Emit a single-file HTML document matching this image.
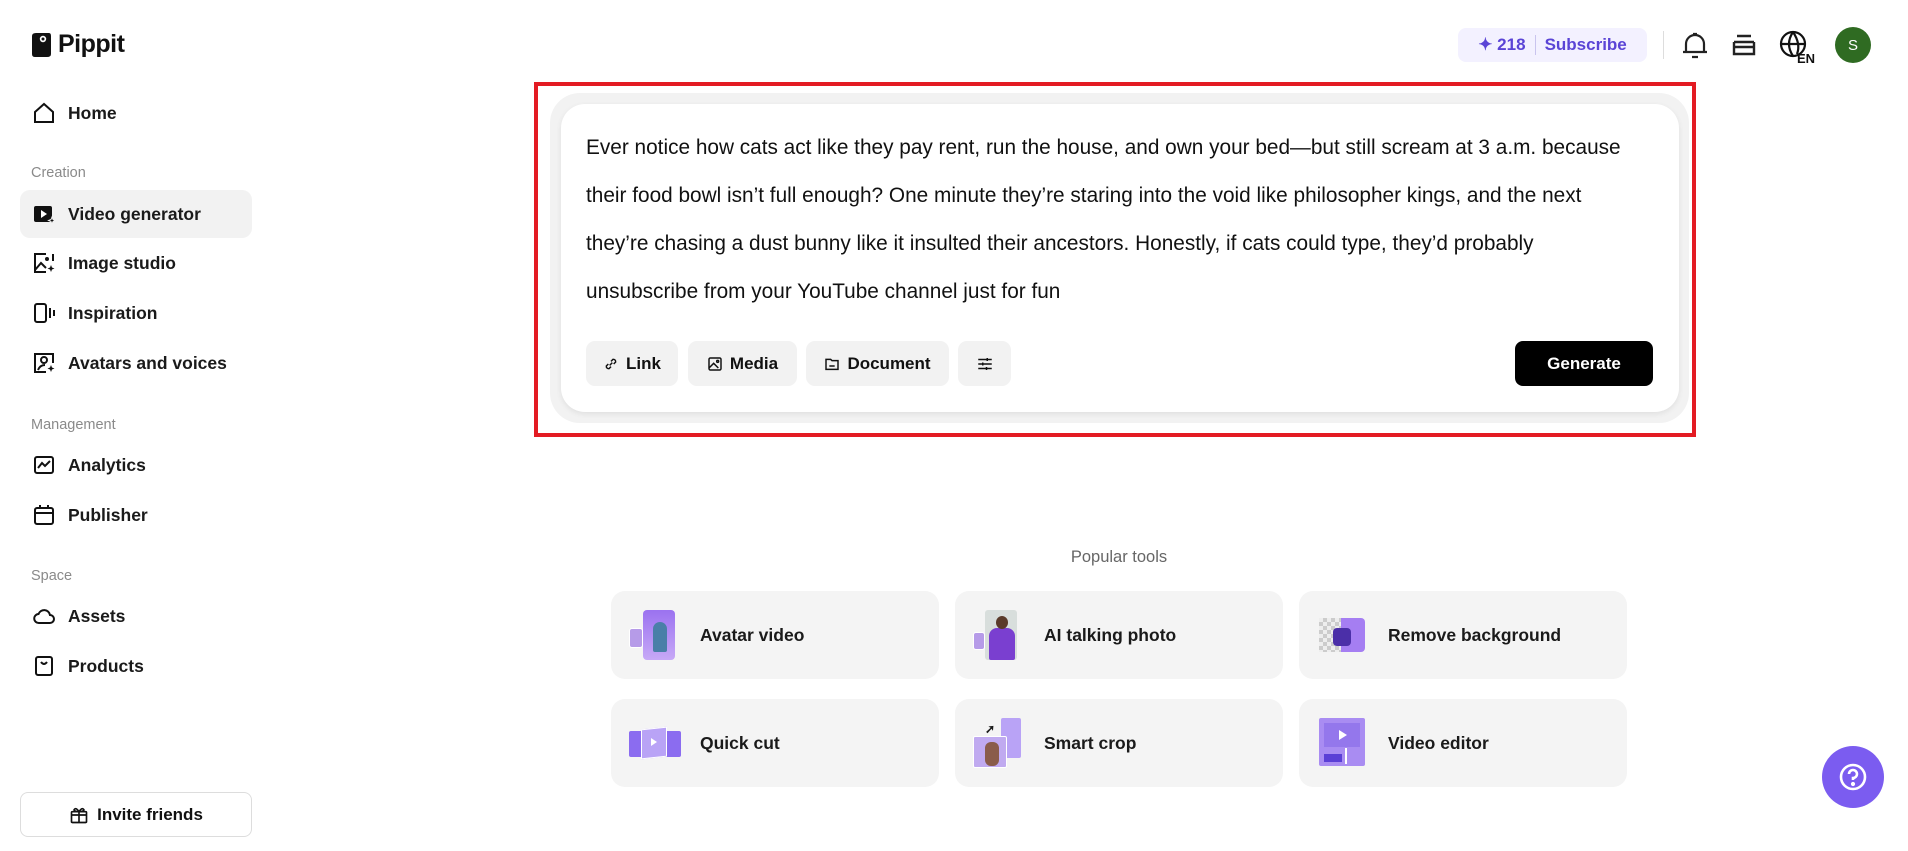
<!DOCTYPE html>
<html><head><meta charset="utf-8"><style>
*{box-sizing:border-box;margin:0;padding:0}
body{width:1908px;height:851px;background:#fff;font-family:"Liberation Sans",Arial,sans-serif;color:#111;position:relative;overflow:hidden}
.abs{position:absolute}
.logo{left:30px;top:30px;font-size:25px;font-weight:700;letter-spacing:-0.5px;display:flex;align-items:center;gap:6px}
.nav{position:absolute;left:20px;width:232px;height:48px;display:flex;align-items:center;padding-left:12px;font-size:17.5px;font-weight:600;color:#1a1a1a;border-radius:10px}
.nav svg{width:24px;height:24px;margin-right:12px;flex:none}
.nav.act{background:#f2f2f2}
.sec{position:absolute;left:31px;font-size:14.5px;color:#8a8a8a;font-weight:500}
.invite{left:20px;top:792px;width:232px;height:45px;border:1px solid #ddd;border-radius:8px;display:flex;align-items:center;justify-content:center;gap:8px;font-size:17px;font-weight:600}
.red{left:534px;top:82px;width:1162px;height:355px;border:4px solid #e31b23}
.outer{left:550px;top:93px;width:1139px;height:330px;background:#f2f2f2;border-radius:30px}
.card{left:561px;top:104px;width:1118px;height:308px;background:#fff;border-radius:24px;box-shadow:0 2px 6px rgba(0,0,0,.08)}
.txt{left:586px;top:124px;width:1052px;font-size:20.8px;line-height:48px;color:#111}
.btn{position:absolute;top:341px;height:45px;background:#f2f2f2;border-radius:9px;display:flex;align-items:center;justify-content:center;gap:7px;font-size:17px;font-weight:600}
.gen{left:1515px;top:341px;width:138px;height:45px;background:#000;color:#fff;border-radius:8px;display:flex;align-items:center;justify-content:center;font-size:17px;font-weight:600}
.tool{position:absolute;width:328px;height:88px;background:#f4f4f4;border-radius:14px;display:flex;align-items:center;padding-left:18px;font-size:17.5px;font-weight:600;color:#1a1a1a}
.ic{width:50px;height:50px;margin-right:21px;position:relative;flex:none}
</style></head><body>

<div class="abs logo"><svg width="22" height="26" viewBox="0 0 22 26"><path d="M2 4 Q2 1 6 1 L19 1 Q21 1 21 4 L21 22 Q21 25 17 25 L5 25 Q2 25 2 22Z" fill="#111"/><circle cx="13" cy="7" r="3.2" fill="#fff"/><circle cx="13" cy="7" r="1.5" fill="#111"/></svg>Pippit</div>

<div class="nav" style="top:89px"><svg viewBox="0 0 24 24" fill="none" stroke="#111" stroke-width="2"><path d="M3 11 L12 3 L21 11 V21 H3Z"/></svg>Home</div>
<div class="sec" style="top:165px">Creation</div>
<div class="nav act" style="top:190px"><svg viewBox="0 0 24 24"><rect x="2" y="4" width="18" height="16" rx="2" fill="#111"/><path d="M9 8 L15 12 L9 16Z" fill="#fff"/><path d="M20 15 l1 2.5 2.5 1 -2.5 1 -1 2.5 -1 -2.5 -2.5 -1 2.5 -1z" fill="#111" stroke="#f2f2f2" stroke-width="1"/></svg>Video generator</div>
<div class="nav" style="top:239px"><svg viewBox="0 0 24 24" fill="none" stroke="#111" stroke-width="2"><path d="M14 3 H3 V21 H14"/><path d="M21 3 V10"/><path d="M3 19 L9 12 L14 17"/><circle cx="15" cy="8" r="1" fill="#111"/><path d="M19 14 l1 2.5 2.5 1 -2.5 1 -1 2.5 -1 -2.5 -2.5 -1 2.5 -1z" fill="#111" stroke="none"/></svg>Image studio</div>
<div class="nav" style="top:289px"><svg viewBox="0 0 24 24" fill="none" stroke="#111" stroke-width="2"><rect x="3" y="3" width="11" height="18" rx="2"/><path d="M18 7 V17 M22 9 V15"/></svg>Inspiration</div>
<div class="nav" style="top:339px"><svg viewBox="0 0 24 24" fill="none" stroke="#111" stroke-width="2"><path d="M14 21 H3 V3 H21 V12"/><circle cx="12" cy="9" r="3"/><path d="M6 19 Q8 14 13 14"/><path d="M19 14 l1 2.5 2.5 1 -2.5 1 -1 2.5 -1 -2.5 -2.5 -1 2.5 -1z" fill="#111" stroke="none"/></svg>Avatars and voices</div>
<div class="sec" style="top:417px">Management</div>
<div class="nav" style="top:441px"><svg viewBox="0 0 24 24" fill="none" stroke="#111" stroke-width="2"><rect x="3" y="4" width="18" height="16" rx="2"/><path d="M6 15 L10 10 L13 13 L18 8"/></svg>Analytics</div>
<div class="nav" style="top:491px"><svg viewBox="0 0 24 24" fill="none" stroke="#111" stroke-width="2"><rect x="3" y="5" width="18" height="16" rx="2"/><path d="M3 10 H21 M8 2 V6 M16 2 V6"/></svg>Publisher</div>
<div class="sec" style="top:568px">Space</div>
<div class="nav" style="top:592px"><svg viewBox="0 0 24 24" fill="none" stroke="#111" stroke-width="2"><path d="M7 19 H18 A4 4 0 0 0 18 11 A6 6 0 0 0 6.5 10 A4.5 4.5 0 0 0 7 19Z"/></svg>Assets</div>
<div class="nav" style="top:642px"><svg viewBox="0 0 24 24" fill="none" stroke="#111" stroke-width="2"><rect x="4" y="3" width="16" height="18" rx="2"/><path d="M9 8 Q12 12 15 8"/></svg>Products</div>
<div class="abs invite"><svg width="20" height="20" viewBox="0 0 24 24" fill="none" stroke="#111" stroke-width="2"><rect x="3" y="8" width="18" height="13" rx="1"/><path d="M3 12 H21 M12 8 V21 M12 8 Q8 2 6 6 Q7 8 12 8 Q16 2 18 6 Q17 8 12 8"/></svg>Invite friends</div>

<div class="abs" style="left:1458px;top:28px;width:189px;height:34px;background:#f3f1ff;border-radius:8px;display:flex;align-items:center;justify-content:center;gap:9px;font-size:17px;font-weight:700;color:#5a44d6">
<span>✦ 218</span><span style="width:1px;height:20px;background:#c9c4ee"></span><span>Subscribe</span></div>
<div class="abs" style="left:1663px;top:31px;width:1px;height:28px;background:#ddd"></div>
<svg class="abs" style="left:1682px;top:31px" width="26" height="28" viewBox="0 0 26 28" fill="none" stroke="#222" stroke-width="2.2"><path d="M4 21 V13 A9 9 0 0 1 22 13 V21 M1 21 H25 M10 26 H16 M11 3 H15"/></svg>
<svg class="abs" style="left:1731px;top:33px" width="26" height="24" viewBox="0 0 26 24" fill="none" stroke="#222" stroke-width="2.4"><path d="M6 3 H20 M3 9 H23 M3 9 V21 H23 V9 M3 14 H23"/></svg>
<svg class="abs" style="left:1779px;top:30px" width="38" height="34" viewBox="0 0 38 34"><g fill="none" stroke="#111" stroke-width="2.2"><circle cx="14" cy="14" r="12"/><path d="M2 14 H26 M14 2 Q6 14 14 26 M14 2 Q22 14 18 24"/></g><text x="18" y="33" font-size="13" font-weight="700" font-family="Liberation Sans" fill="#111">EN</text></svg>
<div class="abs" style="left:1835px;top:27px;width:36px;height:36px;border-radius:50%;background:#2f6b22;color:#fff;font-size:15px;display:flex;align-items:center;justify-content:center">S</div>

<div class="abs red"></div>
<div class="abs outer"></div>
<div class="abs card"></div>
<div class="abs txt">Ever notice how cats act like they pay rent, run the house, and own your bed—but still scream at 3 a.m. because their food bowl isn’t full enough? One minute they’re staring into the void like philosopher kings, and the next they’re chasing a dust bunny like it insulted their ancestors. Honestly, if cats could type, they’d probably unsubscribe from your YouTube channel just for fun</div>
<div class="btn" style="left:586px;width:92px"><svg width="16" height="16" viewBox="0 0 24 24" fill="none" stroke="#111" stroke-width="2.2"><path d="M10 14 L14 10 M8 12 L5 15 A3.5 3.5 0 0 0 9 19 L12 16 M16 12 L19 9 A3.5 3.5 0 0 0 15 5 L12 8"/></svg>Link</div>
<div class="btn" style="left:688px;width:109px"><svg width="16" height="16" viewBox="0 0 24 24" fill="none" stroke="#111" stroke-width="2.2"><rect x="3" y="3" width="18" height="18" rx="2"/><path d="M3 18 L10 11 L17 18"/><circle cx="16" cy="8" r="1.5"/></svg>Media</div>
<div class="btn" style="left:806px;width:143px"><svg width="16" height="16" viewBox="0 0 24 24" fill="none" stroke="#111" stroke-width="2.2"><path d="M3 5 H10 L12 7 H21 V20 H3Z M8 15 H16"/></svg>Document</div>
<div class="btn" style="left:958px;width:53px"><svg width="18" height="18" viewBox="0 0 24 24" fill="none" stroke="#111" stroke-width="2"><path d="M3 6 H21 M3 12 H21 M3 18 H21 M15 4 V8 M9 10 V14 M14 16 V20"/></svg></div>
<div class="abs gen">Generate</div>

<div class="abs" style="left:0;width:2238px;top:548px;text-align:center;font-size:16.5px;color:#666;font-weight:500">Popular tools</div>

<div class="tool" style="left:611px;top:591px"><div class="ic"><div class="abs" style="left:14px;top:0;width:32px;height:50px;background:linear-gradient(#9b72f0,#c7a9f7);border-radius:4px"></div><div class="abs" style="left:24px;top:12px;width:14px;height:30px;background:#4a7fa8;border-radius:7px 7px 2px 2px"></div><div class="abs" style="left:0;top:18px;width:14px;height:20px;background:#b69be8;border:1px solid #fff;border-radius:3px"></div></div>Avatar video</div>
<div class="tool" style="left:955px;top:591px"><div class="ic"><div class="abs" style="left:12px;top:0;width:32px;height:50px;background:#d8dedc;border-radius:3px"></div><div class="abs" style="left:16px;top:18px;width:26px;height:32px;background:#7a3fd0;border-radius:8px 8px 2px 2px"></div><div class="abs" style="left:23px;top:6px;width:12px;height:13px;background:#5a3a2a;border-radius:50%"></div><div class="abs" style="left:0;top:22px;width:12px;height:18px;background:#b69be8;border:1px solid #fff;border-radius:3px"></div></div>AI talking photo</div>
<div class="tool" style="left:1299px;top:591px"><div class="ic"><div class="abs" style="left:2px;top:8px;width:22px;height:34px;background:repeating-conic-gradient(#ccc 0 25%,#eee 0 50%) 0 0/8px 8px"></div><div class="abs" style="left:24px;top:8px;width:24px;height:34px;background:#a57ef2;border-radius:0 4px 4px 0"></div><div class="abs" style="left:16px;top:18px;width:18px;height:18px;background:#4b2fa8;border-radius:4px"></div></div>Remove background</div>

<div class="tool" style="left:611px;top:699px"><div class="ic"><div class="abs" style="left:0;top:13px;width:52px;height:26px;background:#8b6cf0;border-radius:2px"></div><div class="abs" style="left:12px;top:10px;width:26px;height:30px;background:#b9a3f6;border:1px solid #fff;transform:skewY(-6deg)"></div><div class="abs" style="left:22px;top:20px;width:0;height:0;border-left:6px solid #fff;border-top:4px solid transparent;border-bottom:4px solid transparent"></div></div>Quick cut</div>
<div class="tool" style="left:955px;top:699px"><div class="ic"><div class="abs" style="left:28px;top:0;width:20px;height:40px;background:#b9a3f6;border-radius:2px"></div><div class="abs" style="left:0;top:18px;width:34px;height:32px;background:#c0aaf0;border:1px solid #fff;border-radius:2px"></div><div class="abs" style="left:12px;top:24px;width:14px;height:24px;background:#8a5c4a;border-radius:6px"></div><div class="abs" style="left:12px;top:4px;font-size:12px">➚</div></div>Smart crop</div>
<div class="tool" style="left:1299px;top:699px"><div class="ic"><div class="abs" style="left:2px;top:0;width:46px;height:48px;background:#a98cf2;border-radius:2px"></div><div class="abs" style="left:7px;top:5px;width:36px;height:24px;background:#9477ec"></div><div class="abs" style="left:22px;top:12px;border-left:8px solid #fff;border-top:5px solid transparent;border-bottom:5px solid transparent"></div><div class="abs" style="left:7px;top:36px;width:18px;height:8px;background:#5b3fd6"></div><div class="abs" style="left:28px;top:30px;width:2px;height:16px;background:#fff"></div></div>Video editor</div>

<div class="abs" style="left:1822px;top:746px;width:62px;height:62px;border-radius:50%;background:#7b5cf0;display:flex;align-items:center;justify-content:center"><svg width="30" height="30" viewBox="0 0 30 30" fill="none" stroke="#fff" stroke-width="2.6"><circle cx="15" cy="15" r="12"/><path d="M11 12 A4 4 0 1 1 15 16 V18"/><circle cx="15" cy="22" r="0.8" fill="#fff"/></svg></div>
</body></html>
